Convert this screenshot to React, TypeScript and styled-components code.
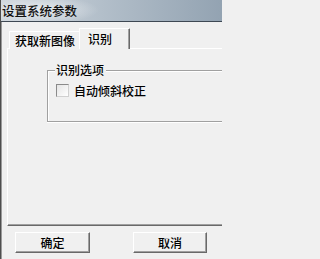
import React from "react";
import styled, { createGlobalStyle } from "styled-components";

const Global = createGlobalStyle`
  html, body { margin: 0; padding: 0; background: #f0f0f0; overflow: hidden; }
  body { font-family: "Noto Sans CJK SC", "Noto Sans", sans-serif; font-size: 12px; font-weight: 500; color: #000; }
`;

const Window = styled.div`
  width: 222px;
  height: 259px;
  box-sizing: border-box;
  border-left: 1px solid #4e4e4e;
  box-shadow: inset 1px 0 0 #9a9a9a;
  background: #f0f0f0;
  display: flex;
  flex-direction: column;
  overflow: hidden;
`;

const TitleBar = styled.div`
  height: 21px;
  flex: none;
  border-bottom: 1px solid #3e4853;
  background:
    radial-gradient(ellipse 60px 14px at 38px 10px, rgba(236, 240, 243, 0.85), rgba(236, 240, 243, 0) 100%),
    linear-gradient(to right, #cfd6dc 0%, #b3bfca 45%, #93a3b2 100%);
  display: flex;
  align-items: center;
  padding-left: 1px;
  font-size: 12.5px;
  color: #111;
`;

const Body = styled.div`
  flex: 1;
  padding: 6px 0 0 6px;
  display: flex;
  flex-direction: column;
`;

const TabRow = styled.div`
  display: flex;
  align-items: flex-end;
  height: 21px;
  margin-bottom: -1px;
  position: relative;
  z-index: 1;
`;

const Tab = styled.div<{ $active?: boolean; $w: number }>`
  box-sizing: border-box;
  width: ${(p) => p.$w}px;
  height: ${(p) => (p.$active ? 21 : 18)}px;
  margin-left: ${(p) => (p.$active ? -1 : 2)}px;
  background: #f0f0f0;
  border-top: 1px solid #fff;
  border-left: 1px solid #fff;
  border-right: ${(p) => (p.$active ? "1px solid #696969" : "1px solid #a0a0a0")};
  box-shadow: ${(p) => (p.$active ? "inset -1px 0 0 #a0a0a0" : "none")};
  display: flex;
  align-items: ${(p) => (p.$active ? "flex-start" : "center")};
  padding-top: ${(p) => (p.$active ? 2 : 0)}px;
  padding-left: ${(p) => (p.$active ? 8 : 5)}px;
  border-radius: 1px 1px 0 0;
  line-height: 16px;
`;

const Panel = styled.div`
  box-sizing: border-box;
  height: 178px;
  border-top: 1px solid #fff;
  border-left: 1px solid #fff;
  border-bottom: 1px solid #696969;
  box-shadow: inset 0 -1px 0 #a0a0a0;
  padding: 21px 0 0 39px;
`;

const Group = styled.div`
  position: relative;
  box-sizing: border-box;
  height: 52px;
  border: 1px solid #a0a0a0;
  border-right: none;
  box-shadow: inset 1px 1px 0 #fff, 0 1px 0 #fff;
  padding: 13px 0 0 8px;
`;

const Legend = styled.span`
  position: absolute;
  top: -8px;
  left: 7px;
  padding: 0 2px 0 1px;
  background: #f0f0f0;
  line-height: 14px;
`;

const CheckRow = styled.label`
  display: flex;
  align-items: center;
  gap: 5px;
  line-height: 13px;
`;

const Box = styled.span`
  box-sizing: border-box;
  width: 13px;
  height: 13px;
  border: 1px solid #8a8a8a;
  border-right-color: #d0d0d0;
  border-bottom-color: #d0d0d0;
  background: linear-gradient(135deg, #e4e4e4 0%, #f4f4f4 60%, #ffffff 100%);
`;

const Footer = styled.div`
  display: flex;
  gap: 43px;
  padding: 6px 0 0 8px;
`;

const Button = styled.div<{ $w: number }>`
  box-sizing: border-box;
  width: ${(p) => p.$w}px;
  height: 21px;
  background: #f0f0f0;
  border-top: 1px solid #fff;
  border-left: 1px solid #fff;
  border-right: 1px solid #696969;
  border-bottom: 1px solid #696969;
  box-shadow: inset -1px -1px 0 #a0a0a0;
  display: flex;
  align-items: center;
  justify-content: center;
  font-size: 12px;
`;

export default function App() {
  return (
    <>
      <Global />
      <Window>
        <TitleBar>设置系统参数</TitleBar>
        <Body>
          <TabRow>
            <Tab $w={71}>获取新图像</Tab>
            <Tab $w={51} $active>识别</Tab>
          </TabRow>
          <Panel>
            <Group>
              <Legend>识别选项</Legend>
              <CheckRow>
                <Box />
                自动倾斜校正
              </CheckRow>
            </Group>
          </Panel>
          <Footer>
            <Button $w={75}>确定</Button>
            <Button $w={74}>取消</Button>
          </Footer>
        </Body>
      </Window>
    </>
  );
}
